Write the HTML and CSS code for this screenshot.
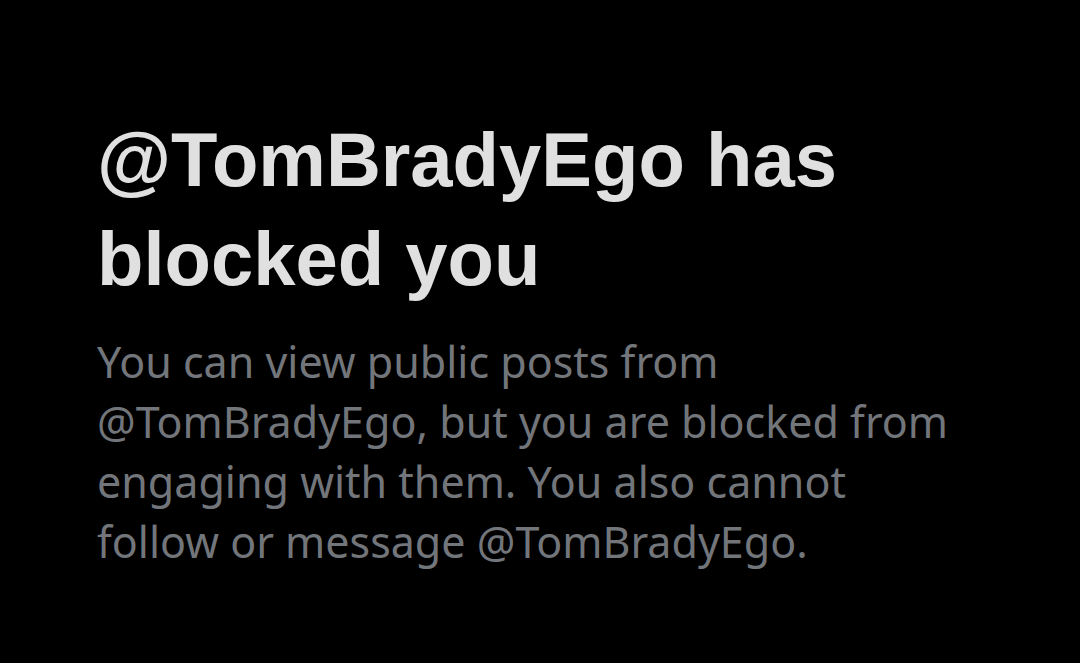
FILE: index.html
```html
<!DOCTYPE html>
<html lang="en">
<head>
    <meta charset="UTF-8">
    <meta name="viewport" content="width=device-width, initial-scale=1.0">
    <title>Blocked</title>
    <link rel="stylesheet" href="styles.css">
</head>
<body>
    <div class="blocked">
        <h1 class="blocked-title">@TomBradyEgo has blocked you</h1>
        <p class="blocked-text">You can view public posts from @TomBradyEgo, but you are blocked from engaging with them. You also cannot follow or message @TomBradyEgo.</p>
    </div>
</body>
</html>
```

FILE: styles.css
```css
html, body {
    margin: 0;
    background-color: #000;
}
body {
    min-height: 663px;
}
.blocked {
    padding: 110px 0 0 97px;
    width: 872px;
}
.blocked-title {
    margin: 0;
    font-family: 'Liberation Sans', Arial, sans-serif;
    font-weight: bold;
    font-size: 76px;
    line-height: 99px;
    color: #e0e0e0;
    width: 800px;
}
.blocked-text {
    margin: 24px 0 0;
    font-family: 'Noto Sans', sans-serif;
    font-size: 43px;
    line-height: 60px;
    color: #72767b;
}
```
